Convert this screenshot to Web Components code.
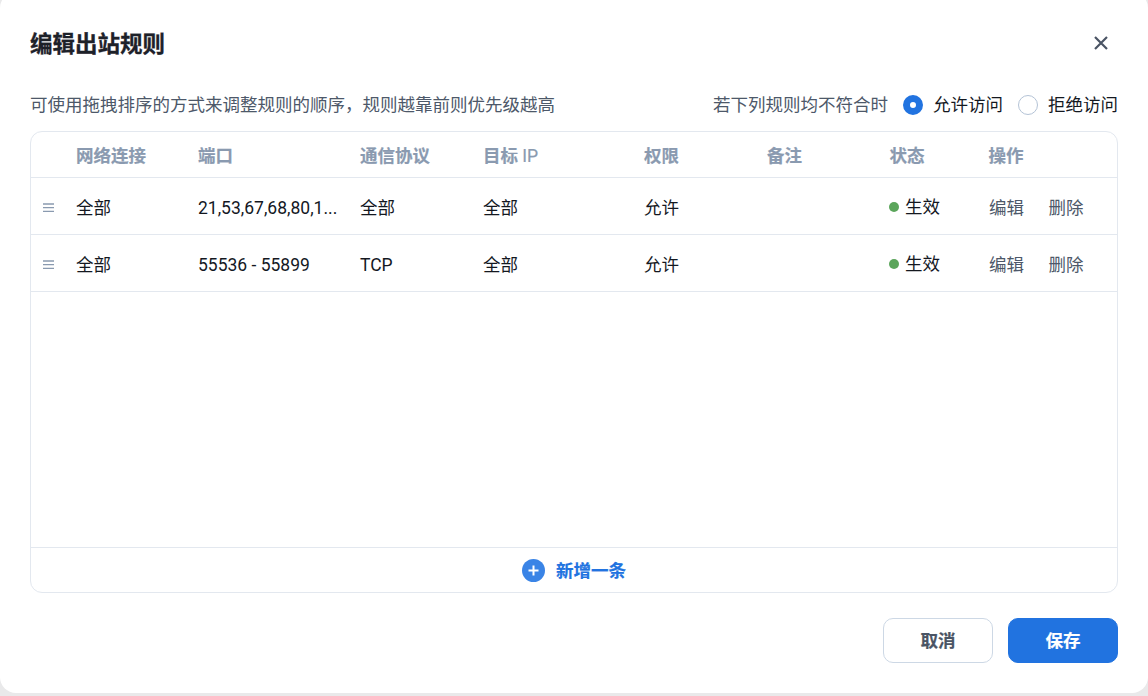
<!DOCTYPE html>
<html lang="zh"><head><meta charset="utf-8"><title>编辑出站规则</title>
<style>
html,body{margin:0;height:100%;background:#e9e9ea;overflow:hidden}
body{font:17.5px/1.3 Roboto,"Noto Sans CJK SC",sans-serif;color:#14181f}
</style></head><body>
<rule-dialog>
  <span slot="title">编辑出站规则</span>
  <span slot="hint">可使用拖拽排序的方式来调整规则的顺序，规则越靠前则优先级越高</span>
  <rule-row head>
    <span>网络连接</span><span>端口</span><span>通信协议</span><span>目标 <span style="font-weight:400">IP</span></span><span>权限</span><span>备注</span><span>状态</span><span>操作</span>
  </rule-row>
  <rule-row>
    <span>全部</span><span>21,53,67,68,80,1...</span><span>全部</span><span>全部</span><span>允许</span><span></span><status-dot>生效</status-dot><row-actions></row-actions>
  </rule-row>
  <rule-row>
    <span>全部</span><span>55536 - 55899</span><span>TCP</span><span>全部</span><span>允许</span><span></span><status-dot>生效</status-dot><row-actions></row-actions>
  </rule-row>
</rule-dialog>
<script>
const el=(name,html)=>customElements.define(name,class extends HTMLElement{
  connectedCallback(){ if(this.shadowRoot) return; this.attachShadow({mode:'open'}).innerHTML=html; }
});
el('radio-option',`<style>
:host{display:inline-flex;align-items:center;gap:10px;color:#14181f}
i{box-sizing:border-box;width:20px;height:20px;border-radius:50%;border:1px solid #b4c3d6;background:#fff;flex:none}
:host([checked]) i{border:7px solid #2173e0}
</style><i></i><span><slot></slot></span>`);
el('dlg-button',`<style>
:host{box-sizing:border-box;display:flex;align-items:center;justify-content:center;width:110px;height:45px;padding-top:2px;border-radius:10px;font-weight:700;-webkit-text-stroke:.2px;border:1px solid #cdd8e5;color:#4a5464;background:#fff}
:host([primary]){background:#2173e0;border-color:#2173e0;color:#fff}
</style><slot></slot>`);
el('status-dot',`<style>
:host{display:flex;align-items:center;gap:6px;margin:-2px 0 0 -.5px}
i{width:10px;height:10px;border-radius:50%;background:#5ba55b;flex:none;margin-top:-2px}
</style><i></i><slot></slot>`);
el('row-actions',`<style>
:host{display:flex;gap:24.5px;margin-left:.5px;color:#4d5869}
</style><span>编辑</span><span>删除</span>`);
el('rule-row',`<style>
:host{box-sizing:border-box;display:grid;grid-template-columns:45px 122px 162px 123px 161px 123px 122.5px 99px 1fr;align-items:center;height:57px;padding-top:5px;border-bottom:1px solid #e3e8ef;color:#14181f}
:host([head]){height:46px;padding-top:3px;color:#8a9ab0;font-weight:700;-webkit-text-stroke:.2px}
.h{display:flex;padding-left:12px;align-items:center;align-self:stretch;margin-top:-2px}
svg{display:block}
:host([head]) .h svg{display:none}
::slotted(*){white-space:nowrap}
</style><div class="h"><svg width="11" height="10" viewBox="0 0 11 10" fill="none" stroke="#8a9ab0" stroke-width="1.3"><path d="M0 1h11M0 4.7h11M0 8.4h11"/></svg></div><slot></slot>`);
el('rule-dialog',`<style>
:host{box-sizing:border-box;display:flex;flex-direction:column;width:1148px;height:701px;margin-top:-8px;background:#fff;border-radius:16px;padding:8px 30px 0}
header{display:flex;justify-content:space-between;align-items:center;height:88px}
h2{margin:0;font-size:22.5px;font-weight:700;-webkit-text-stroke:.3px;color:#1d2129;line-height:30px}
.close{width:16px;height:16px;margin:-2px 9px 0 0;display:block}
.bar{display:flex;align-items:center;justify-content:space-between;height:34px;margin-bottom:9px;color:#4d5869}
.opts{display:flex;align-items:center;gap:15px}
.table{box-sizing:border-box;flex:none;height:462px;border:1px solid #e3e8ef;border-radius:12px;display:flex;flex-direction:column;overflow:hidden}
.rows{flex:1}
.add{box-sizing:border-box;height:45px;border-top:1px solid #e3e8ef;display:flex;align-items:center;justify-content:center;gap:11px;color:#2173e0;font-weight:700;-webkit-text-stroke:.2px}
.add span{margin-top:2px}
footer{display:flex;justify-content:flex-end;gap:15px;margin-top:25px}
</style>
<header><h2><slot name="title"></slot></h2>
<svg class="close" viewBox="0 0 16 16" fill="none" stroke="#4a5464" stroke-width="2.2"><path d="M2 2l12 12M14 2L2 14"/></svg></header>
<div class="bar"><span class="hint"><slot name="hint"></slot></span>
<div class="opts"><span class="q">若下列规则均不符合时</span><radio-option checked>允许访问</radio-option><radio-option>拒绝访问</radio-option></div></div>
<div class="table"><div class="rows"><slot></slot></div>
<div class="add"><svg width="23" height="23" viewBox="0 0 23 23"><circle cx="11.5" cy="11.5" r="11.5" fill="#3a84e6"/><path d="M6.5 11.5h10M11.5 6.5v10" stroke="#fff" stroke-width="2"/></svg><span>新增一条</span></div></div>
<footer><dlg-button>取消</dlg-button><dlg-button primary>保存</dlg-button></footer>`);
</script>
</body></html>
